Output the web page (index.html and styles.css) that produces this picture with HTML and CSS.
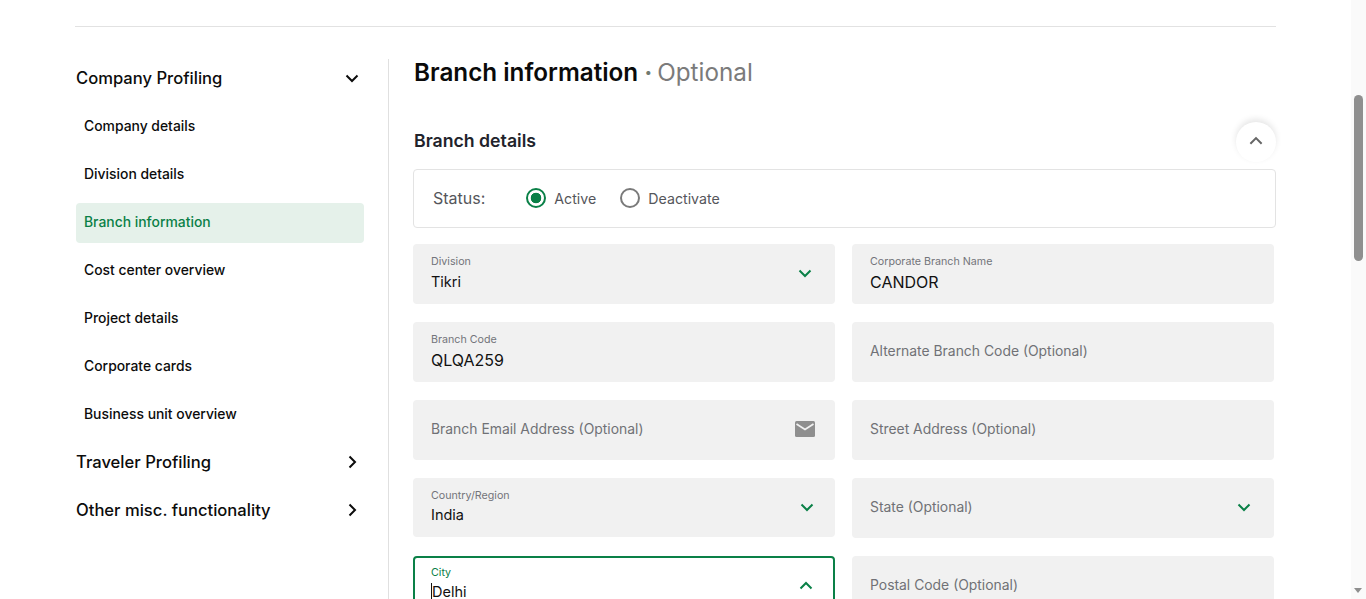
FILE: index.html
```html
<!DOCTYPE html>
<html lang="en">
<head>
<meta charset="utf-8">
<title>Branch information</title>
<link rel="stylesheet" href="styles.css">
</head>
<body>
<div class="viewport">
  <div class="page">
    <div class="rule"></div>
    <div class="layout">
      <nav class="sidebar">
        <div class="nav-head"><span>Company Profiling</span>
          <svg class="nav-ic" viewBox="0 0 16 16"><path d="M2.5 5.5 8 11l5.5-5.5"/></svg></div>
        <a class="nav-item">Company details</a>
        <a class="nav-item">Division details</a>
        <a class="nav-item active">Branch information</a>
        <a class="nav-item">Cost center overview</a>
        <a class="nav-item">Project details</a>
        <a class="nav-item">Corporate cards</a>
        <a class="nav-item">Business unit overview</a>
        <div class="nav-head"><span>Traveler Profiling</span>
          <svg class="nav-ic" viewBox="0 0 16 16"><path d="M5.5 2.5 11 8l-5.5 5.5"/></svg></div>
        <div class="nav-head"><span>Other misc. functionality</span>
          <svg class="nav-ic" viewBox="0 0 16 16"><path d="M5.5 2.5 11 8l-5.5 5.5"/></svg></div>
      </nav>
      <main class="main">
        <h1 class="title">Branch information <span class="title-opt"><span class="dot">·</span> Optional</span></h1>
        <div class="section-head">
          <h2 class="section-title">Branch details</h2>
          <button class="collapse" aria-label="Collapse">
            <svg viewBox="0 0 16 16"><path d="M3 9.5 8 4.5l5 5"/></svg>
          </button>
        </div>
        <div class="status">
          <span class="status-label">Status:</span>
          <span class="radio on"></span><span class="radio-text">Active</span>
          <span class="radio off"></span><span class="radio-text">Deactivate</span>
        </div>
        <div class="grid">
          <div class="field"><div class="txt"><div class="lab">Division</div><div class="val small">Tikri</div></div>
            <svg class="chev" viewBox="0 0 16 16"><path d="M2.5 5.5 8 11l5.5-5.5"/></svg></div>
          <div class="field"><div class="txt"><div class="lab">Corporate Branch Name</div><div class="val">CANDOR</div></div></div>
          <div class="field"><div class="txt"><div class="lab">Branch Code</div><div class="val">QLQA259</div></div></div>
          <div class="field"><div class="ph">Alternate Branch Code (Optional)</div></div>
          <div class="field"><div class="ph">Branch Email Address (Optional)</div>
            <svg class="mail" viewBox="0 0 20 16"><rect width="20" height="16" rx="1.5" fill="#8f8f8f"/><path d="M1.5 3 10 8.5 18.5 3" fill="none" stroke="#f1f1f1" stroke-width="1.8"/></svg></div>
          <div class="field"><div class="ph">Street Address (Optional)</div></div>
          <div class="field short"><div class="txt"><div class="lab">Country/Region</div><div class="val small tight">India</div></div>
            <svg class="chev out2" viewBox="0 0 16 16"><path d="M2.5 5.5 8 11l5.5-5.5"/></svg></div>
          <div class="field"><div class="ph">State (Optional)</div>
            <svg class="chev" viewBox="0 0 16 16"><path d="M2.5 5.5 8 11l5.5-5.5"/></svg></div>
          <div class="field focus"><div class="txt"><div class="lab">City</div><div class="val small tight"><span class="caret"></span>Delhi</div></div>
            <svg class="chev out1" viewBox="0 0 16 16"><path d="M2.5 10.5 8 5l5.5 5.5"/></svg></div>
          <div class="field"><div class="ph">Postal Code (Optional)</div></div>
        </div>
      </main>
    </div>
  </div>
  <div class="scrollbar">
    <div class="thumb"></div>
    <div class="arrow"></div>
  </div>
</div>
</body>
</html>
```
FILE: styles.css
```css
* { box-sizing: border-box; }
html, body { margin: 0; padding: 0; background: #fff; }
body { font-family: Inter, "Noto Sans", sans-serif; color: #0c0c0c; }
.viewport { display: flex; width: 1366px; height: 599px; overflow: hidden; }
.page { flex: 1; min-width: 0; padding: 26px 75px 0; }
.rule { height: 1px; background: #e2e2e2; }
.layout { display: flex; margin-top: 31px; }
.sidebar { width: 313px; height: 600px; margin: 1px 25px 0 1px; padding: 0 24px 0 0; border-right: 1px solid #e0e0e0; flex: none; }
.nav-head { display: flex; justify-content: space-between; align-items: center; height: 40px; margin-bottom: 8px; padding: 0 4px 2px 0; font-size: 16.6px; font-weight: 500; color: #0c0c0c; }
.nav-ic { width: 16px; height: 16px; fill: none; stroke: #0c0c0c; stroke-width: 2; }
.nav-item { display: flex; align-items: center; height: 40px; margin-bottom: 8px; padding: 0 0 2px 8px; border-radius: 4px; font-size: 13.9px; font-weight: 500; color: #0c0c0c; }
.nav-item.active { background: #e5f1ea; color: #0a8047; }
.main { flex: 1; min-width: 0; }
.title { margin: 0; height: 30px; line-height: 30px; font-size: 24.25px; font-weight: 600; color: #0a0a0a; }
.title-opt { font-weight: 400; color: #7b7b7b; }
.dot { color: #6f7a70; font-weight: 700; margin-right: -2px; }
.section-head { display: flex; justify-content: space-between; align-items: center; height: 40px; margin-top: 33px; }
.section-title { margin: 0 0 1px; font-size: 17.7px; font-weight: 600; color: #22232b; }
.collapse { width: 40px; height: 40px; margin-top: 2px; border: 0; padding: 0; border-radius: 50%; background: #fff; box-shadow: 0 -3px 6px rgba(0,0,0,.1); display: flex; align-items: center; justify-content: center; }
.collapse svg { width: 18px; height: 18px; fill: none; stroke: #666; stroke-width: 1.8; }
.status { display: flex; align-items: center; height: 59px; margin: 8px 0 16px -1px; padding: 0 0 1px 19px; border: 1px solid #e3e3e3; border-radius: 4px; }
.status-label { font-size: 16px; color: #55565b; margin-right: 41px; }
.radio { width: 20px; height: 20px; border-radius: 50%; flex: none; margin-right: 8px; }
.radio.on { border: 2px solid #0a8047; background: radial-gradient(circle, #0a8047 0 5px, #fff 5.6px); }
.radio.off { border: 2px solid #7a7a7a; }
.radio-text { font-size: 14.2px; color: #55565b; margin-right: 24px; }
.grid { display: grid; grid-template-columns: 422px 422px; column-gap: 17px; row-gap: 18px; margin-left: -1px; align-items: start; }
.field { display: flex; align-items: center; justify-content: space-between; height: 60px; padding: 0 22px 2px 18px; background: #f1f1f1; border-radius: 4px; }
.field.short { height: 59px; }
.field.focus { background: #fff; border: 2px solid #0a8047; padding: 0 20px 4px 16px; }
.lab { font-size: 10.7px; line-height: 14px; color: #73747a; }
.focus .lab { color: #0a8047; }
.val { font-size: 16px; line-height: 20px; margin-top: 3px; color: #111; }
.val.small { font-size: 14.5px; }
.val.tight { margin-top: 2px; }
.ph { font-size: 13.9px; color: #707176; }
.chev { width: 16px; height: 16px; fill: none; stroke: #0a8047; stroke-width: 2; }
.chev.out2 { margin-right: -2px; }
.chev.out1 { margin: 4px -1px 0 0; }
.mail { width: 20px; height: 16px; margin-right: -2px; }
.caret { display: inline-block; width: 1px; height: 17px; background: #111; vertical-align: -3px; }
.scrollbar { width: 15px; flex: none; background: #fafafa; position: relative; }
.thumb { position: absolute; left: 3px; top: 95px; width: 9px; height: 166px; border-radius: 5px; background: #8f8f8f; }
.arrow { position: absolute; left: 3px; bottom: 6px; width: 0; height: 0; border: 4.5px solid transparent; border-top: 5px solid #8f8f8f; border-bottom: 0; }
```
